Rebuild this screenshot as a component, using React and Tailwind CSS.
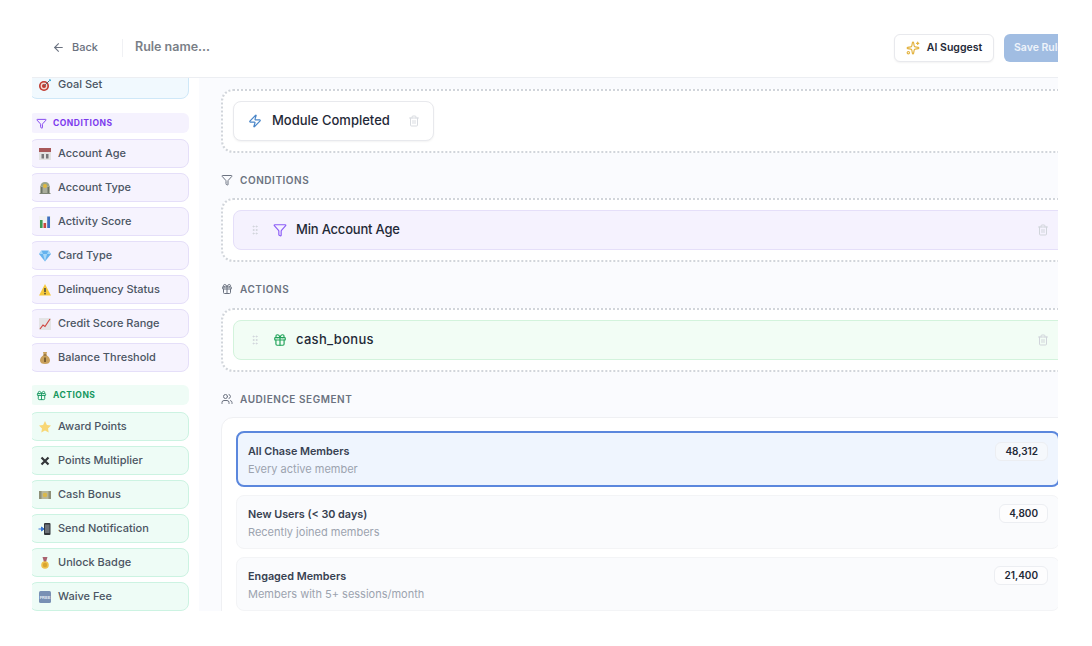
import React from "react";
import { ArrowLeft, Funnel, Gift, GripVertical, Sparkles, Trash2, Users, Zap } from "lucide-react";

const IconTarget = () => (
  <svg viewBox="0 0 14 14" className="w-[14px] h-[14px]">
    <circle cx="6" cy="8" r="5" fill="#c0392f" />
    <circle cx="6" cy="8" r="3.4" fill="#f2d9d2" />
    <circle cx="6" cy="8" r="2" fill="#c0392f" />
    <path d="M6 8 11.5 2.5" stroke="#5a6b75" strokeWidth="1" />
    <path d="M11 1.2l1.8.2.2 1.6-1.6.3z" fill="#3fa7d6" />
  </svg>
);

const IconCalendar = () => (
  <svg viewBox="0 0 14 14" className="w-[14px] h-[14px]">
    <rect x="1" y="1" width="12" height="12" fill="#e2e2e2" />
    <rect x="1" y="1" width="12" height="4" fill="#a8585a" />
    <rect x="3.5" y="7" width="2.5" height="4.5" fill="#77777a" />
    <rect x="8" y="7" width="2.5" height="4.5" fill="#77777a" />
  </svg>
);

const IconBank = () => (
  <svg viewBox="0 0 14 14" className="w-[14px] h-[14px]">
    <path d="M7 1c3 0 4.500 2 4.500 4H2.500C2.500 3 4 1 7 1z" fill="#9aa58c" />
    <rect x="2" y="5" width="10" height="7" fill="#a9ad9a" />
    <rect x="3" y="6" width="1.5" height="6" fill="#6c7466" />
    <rect x="9.5" y="6" width="1.5" height="6" fill="#6c7466" />
    <circle cx="7" cy="5" r="2" fill="#e0b93c" />
    <rect x="1.5" y="12" width="11" height="1" fill="#7f8676" />
  </svg>
);

const IconBars = () => (
  <svg viewBox="0 0 14 14" className="w-[14px] h-[14px]">
    <rect width="12" height="12" x="1" y="1" fill="#f2f2f2" />
    <rect x="2" y="5" width="2.6" height="8" fill="#3f9b52" />
    <rect x="5.5" y="8" width="2.6" height="5" fill="#c8483f" />
    <rect x="9.2" y="1.5" width="2.8" height="11.5" fill="#3f6fc0" />
  </svg>
);

const IconGem = () => (
  <svg viewBox="0 0 14 14" className="w-[14px] h-[14px]">
    <path d="M3.500 1.500h7L13 5l-6 7.500L1 5z" fill="#66b3ee" />
    <path d="M5 5h4l-2 7.500zM3.500 1.500 5 5H1zM10.500 1.500 9 5h4z" fill="#a8d8f8" />
  </svg>
);

const IconWarning = () => (
  <svg viewBox="0 0 14 14" className="w-[14px] h-[14px]">
    <path d="M7 1 13 12.500H1z" fill="#f6c93c" />
    <rect x="6.3" y="5" width="1.4" height="4.2" fill="#3b3b3b" />
    <rect x="6.3" y="10" width="1.4" height="1.4" fill="#3b3b3b" />
  </svg>
);

const IconTrend = () => (
  <svg viewBox="0 0 14 14" className="w-[14px] h-[14px]">
    <rect x="1" y="1" width="12" height="12" fill="#e4e4e6" />
    <path d="M2 12 5 8l2 1.500L12 2" fill="none" stroke="#d0453f" strokeWidth="1.2" />
  </svg>
);

const IconMoneyBag = () => (
  <svg viewBox="0 0 14 14" className="w-[14px] h-[14px]">
    <path d="M5 1h4L8.300 4c2.500 1.500 3.700 3.500 3.700 5.500 0 2.500-2 3.500-5 3.500s-5-1-5-3.500C2 7.500 3.200 5.500 5.700 4z" fill="#c9a15c" />
    <rect x="5.5" y="3.5" width="3" height="1" fill="#7b5b2c" />
    <rect x="6.3" y="6.5" width="1.4" height="4.5" fill="#5a4420" />
  </svg>
);

const IconStar = () => (
  <svg viewBox="0 0 14 14" className="w-[14px] h-[14px]">
    <path d="M7 1l1.900 3.900 4.100.6-3 2.900.7 4.100L7 10.600 3.300 12.500 4 8.400 1 5.500l4.100-.6z" fill="#f8d775" />
  </svg>
);

const IconCross = () => (
  <svg viewBox="0 0 14 14" className="w-[14px] h-[14px]">
    <path d="M3.500 3.500l7 7M10.500 3.500l-7 7" stroke="#33363a" strokeWidth="2.2" />
  </svg>
);

const IconBanknote = () => (
  <svg viewBox="0 0 14 14" className="w-[14px] h-[14px]">
    <rect x="1" y="3" width="12" height="8" fill="#b8b79a" />
    <rect x="1" y="3" width="2.5" height="8" fill="#8f9078" />
    <rect x="10.5" y="3" width="2.5" height="8" fill="#8f9078" />
    <circle cx="7" cy="7" r="2.3" fill="#d9b84c" />
  </svg>
);

const IconPhone = () => (
  <svg viewBox="0 0 14 14" className="w-[14px] h-[14px]">
    <rect x="6" y="1" width="6.5" height="12" rx="1" fill="#33373c" />
    <rect x="7" y="2.5" width="4.5" height="8.5" fill="#6d7278" />
    <path d="M.500 7h5M3.500 5l2.500 2-2.500 2z" stroke="#3a77d6" strokeWidth="1" fill="#3a77d6" />
  </svg>
);

const IconMedal = () => (
  <svg viewBox="0 0 14 14" className="w-[14px] h-[14px]">
    <path d="M4.500 1h5L8 6H6z" fill="#a8626f" />
    <circle cx="7" cy="9" r="3.8" fill="#eec14d" />
    <circle cx="7" cy="9" r="2.2" fill="#d9a52f" />
  </svg>
);

const IconFree = () => (
  <svg viewBox="0 0 14 14" className="w-[14px] h-[14px]">
    <rect x="1" y="1" width="12" height="12" rx="1.5" fill="#7890b4" />
    <text x="7" y="8.800" textAnchor="middle" fontSize="4" fontWeight="700" fill="#e8edf5" fontFamily="Liberation Sans, sans-serif">FREE</text>
  </svg>
);

const conditionBlocks = [
  { label: "Account Age", icon: <IconCalendar /> },
  { label: "Account Type", icon: <IconBank /> },
  { label: "Activity Score", icon: <IconBars /> },
  { label: "Card Type", icon: <IconGem /> },
  { label: "Delinquency Status", icon: <IconWarning /> },
  { label: "Credit Score Range", icon: <IconTrend /> },
  { label: "Balance Threshold", icon: <IconMoneyBag /> },
];

const actionBlocks = [
  { label: "Award Points", icon: <IconStar /> },
  { label: "Points Multiplier", icon: <IconCross /> },
  { label: "Cash Bonus", icon: <IconBanknote /> },
  { label: "Send Notification", icon: <IconPhone /> },
  { label: "Unlock Badge", icon: <IconMedal /> },
  { label: "Waive Fee", icon: <IconFree /> },
];

const segments = [
  { name: "All Chase Members", desc: "Every active member", count: "48,312", active: true },
  { name: "New Users (< 30 days)", desc: "Recently joined members", count: "4,800" },
  { name: "Engaged Members", desc: "Members with 5+ sessions/month", count: "21,400" },
];

const PaletteItem = ({ icon, label, className }) => (
  <div className={`h-[29px] shrink-0 rounded-lg border flex items-center gap-[6px] pl-2 ${className}`}>
    <span className="w-[14px] flex justify-center">{icon}</span>
    <span className="text-[11px] font-medium text-[#4b5563]">{label}</span>
  </div>
);

const SectionLabel = ({ icon, children }) => (
  <div className="flex items-center gap-[7px] h-[14px] text-[#6b7280]">
    {icon}
    <span className="text-[10px] font-semibold tracking-[0.55px]">{children}</span>
  </div>
);

const RuleBlock = ({ icon, label, className, labelClassName }) => (
  <div className={`h-10 rounded-lg border flex items-center pr-[19px] ${className}`}>
    <GripVertical size={12} strokeWidth={2} className="ml-[15px] text-[#d1d5db]" />
    <span className="ml-[12px]">{icon}</span>
    <span className={`ml-[9px] text-[13px] font-medium text-[#1f2937] ${labelClassName}`}>{label}</span>
    <Trash2 size={12} className="ml-auto text-[#d1d5db]" />
  </div>
);

export default function App() {
  return (
    <div className="h-[646px] bg-white pt-[33px] pl-8" style={{ fontFamily: "Inter, 'Noto Sans', sans-serif" }}>
      <div className="w-[1026px] h-[578px] overflow-hidden flex flex-col">
        <header className="w-[1048px] h-[45px] shrink-0 border-b border-[#eceef2] flex items-center pl-5 pb-[15px]">
          <button className="flex items-center gap-[7px] text-[11px] font-medium text-[#6b7280]">
            <ArrowLeft size={13} />
            Back
          </button>
          <div className="ml-6 w-px h-[18px] bg-[#f0f1f4]" />
          <span className="ml-3 text-[12.5px] font-semibold text-[#7a7f87]">Rule name...</span>
          <button className="ml-auto h-7 w-[100px] shrink-0 rounded-md border border-[#e8e9ed] bg-white shadow-xs flex items-center justify-center gap-[7px] text-[10.5px] font-semibold text-[#1f2937]">
            <Sparkles size={14} className="text-[#e3b341]" />
            AI Suggest
          </button>
          <button className="ml-[10px] h-7 w-[76px] shrink-0 rounded-md bg-[#a1bde2] text-[10.5px] font-semibold text-[#eef3fa] text-left pl-[10px]">
            Save Rule
          </button>
        </header>

        <div className="flex flex-1 min-h-0 overflow-hidden">
          <aside className="w-[167px] shrink-0 overflow-hidden bg-white">
            <div className="-ml-[3px] w-[160px] -mt-2 flex flex-col">
              <PaletteItem icon={<IconTarget />} label="Goal Set" className="border-[#cfe8f8] bg-[#f1f9fe]" />
              <div className="mt-[14px] h-5 rounded-md bg-[#f5f2fe] flex items-center gap-[6px] pl-[7px] text-[#7c3aed]">
                <Funnel size={11} />
                <span className="text-[8.5px] font-bold tracking-[0.5px]">CONDITIONS</span>
              </div>
              <div className="mt-[6px] flex flex-col gap-[5px]">
                {conditionBlocks.map((b) => (
                  <PaletteItem key={b.label} icon={b.icon} label={b.label} className="border-[#e5dff9] bg-[#f6f3fe]" />
                ))}
              </div>
              <div className="mt-[13px] h-5 rounded-md bg-[#effcf6] flex items-center gap-[6px] pl-[7px] text-[#16975f]">
                <Gift size={11} />
                <span className="text-[8.5px] font-bold tracking-[0.5px]">ACTIONS</span>
              </div>
              <div className="mt-[7px] flex flex-col gap-[5px]">
                {actionBlocks.map((b) => (
                  <PaletteItem key={b.label} icon={b.icon} label={b.label} className="border-[#ccf3e2] bg-[#eefcf6]" />
                ))}
              </div>
            </div>
          </aside>

          <main className="flex-1 min-w-0 bg-[#fafbfe] overflow-hidden pl-[22px] pt-[11px]">
            <div className="w-[860px] flex flex-col">
              <div className="h-[64px] rounded-xl border-2 border-dotted border-[#d1d5db] bg-white pl-[10px] pt-[10px]">
                <div className="w-[201px] h-10 rounded-lg border border-[#e8e9ed] bg-white shadow-xs flex items-center pl-[14px]">
                  <Zap size={14} className="text-[#4a86c8]" />
                  <span className="ml-[10px] text-[13px] font-medium text-[#1f2937]">Module Completed</span>
                  <Trash2 size={12} className="ml-[18px] text-[#d9dce1]" />
                </div>
              </div>

              <div className="mt-5">
                <SectionLabel icon={<Funnel size={12} />}>CONDITIONS</SectionLabel>
              </div>
              <div className="mt-[11px] h-[64px] rounded-xl border-2 border-dotted border-[#d1d5db] bg-white px-[10px] pt-[10px]">
                <RuleBlock
                  icon={<Funnel size={14} className="text-[#8b5cf6]" />}
                  label="Min Account Age"
                  labelClassName="tracking-[-0.2px]"
                  className="border-[#e5dff9] bg-[#f5f2fe]"
                />
              </div>

              <div className="mt-5">
                <SectionLabel icon={<Gift size={12} />}>ACTIONS</SectionLabel>
              </div>
              <div className="mt-3 h-[64px] rounded-xl border-2 border-dotted border-[#d1d5db] bg-white px-[10px] pt-[10px]">
                <RuleBlock
                  icon={<Gift size={14} className="text-[#22a35a]" />}
                  label="cash_bonus"
                  labelClassName="tracking-[0.3px]"
                  className="border-[#d3f3dc] bg-[#f2fdf5]"
                />
              </div>

              <div className="mt-5">
                <SectionLabel icon={<Users size={12} />}>AUDIENCE SEGMENT</SectionLabel>
              </div>
              <div className="mt-[11px] rounded-xl border border-[#eff0f3] bg-white pt-[13px] px-[14px] pb-3 flex flex-col gap-2">
                {segments.map((s) => (
                  <div
                    key={s.name}
                    className={`w-[824px] shrink-0 rounded-lg flex justify-between ${
                      s.active
                        ? "h-[56px] border-2 border-[#5b87dd] bg-[#eff5fe] pl-[10px] pr-[10px] pt-[9px]"
                        : "h-[54px] border border-[#f3f4f6] bg-[#fafbfd] px-[11px] pt-2"
                    }`}
                  >
                    <div className={s.active ? "pt-[3px]" : "pt-1"}>
                      <div className="text-[10.8px] font-semibold text-[#374151] leading-[14px]">{s.name}</div>
                      <div className="mt-[3px] text-[11px] text-[#9ca3af] leading-[14px]">{s.desc}</div>
                    </div>
                    <span
                      className={`h-[19px] rounded-md border border-[#eceef2] px-[9px] text-[10px] font-semibold text-[#1f2937] leading-[17px] ${
                        s.active ? "bg-[#f5f8fc]" : "bg-[#fdfdfe]"
                      }`}
                    >
                      {s.count}
                    </span>
                  </div>
                ))}
              </div>
            </div>
          </main>
        </div>
      </div>
    </div>
  );
}
